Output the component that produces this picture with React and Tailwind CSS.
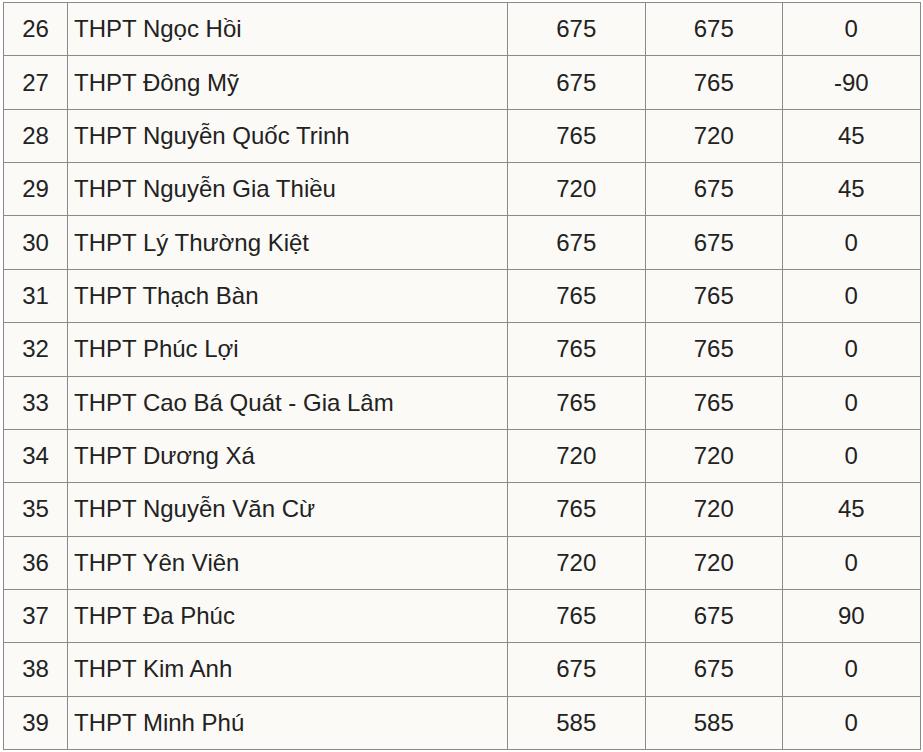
import React from "react";

const rows = [
  [26, "THPT Ngọc Hồi", 675, 675, "0"],
  [27, "THPT Đông Mỹ", 675, 765, "-90"],
  [28, "THPT Nguyễn Quốc Trinh", 765, 720, "45"],
  [29, "THPT Nguyễn Gia Thiều", 720, 675, "45"],
  [30, "THPT Lý Thường Kiệt", 675, 675, "0"],
  [31, "THPT Thạch Bàn", 765, 765, "0"],
  [32, "THPT Phúc Lợi", 765, 765, "0"],
  [33, "THPT Cao Bá Quát - Gia Lâm", 765, 765, "0"],
  [34, "THPT Dương Xá", 720, 720, "0"],
  [35, "THPT Nguyễn Văn Cừ", 765, 720, "45"],
  [36, "THPT Yên Viên", 720, 720, "0"],
  [37, "THPT Đa Phúc", 765, 675, "90"],
  [38, "THPT Kim Anh", 675, 675, "0"],
  [39, "THPT Minh Phú", 585, 585, "0"],
];

const App = () => {
  return (
    <div className="min-h-screen bg-white pl-[3px] pt-[2px] font-['Liberation_Sans',Arial,sans-serif]">
      <table className="border-collapse bg-[#fbfaf7] text-[24px] text-[#222]">
        <tbody>
          {rows.map((r) => (
            <tr key={r[0]} className="h-[53.36px]">
              <td className="w-[64px] border border-[#8a8a8a] text-center p-0">{r[0]}</td>
              <td className="w-[440px] border border-[#8a8a8a] p-0 pl-[6px]">{r[1]}</td>
              <td className="w-[137.5px] border border-[#8a8a8a] text-center p-0">{r[2]}</td>
              <td className="w-[137.5px] border border-[#8a8a8a] text-center p-0">{r[3]}</td>
              <td className="w-[137.5px] border border-[#8a8a8a] text-center p-0">{r[4]}</td>
            </tr>
          ))}
        </tbody>
      </table>
    </div>
  );
};

export default App;
